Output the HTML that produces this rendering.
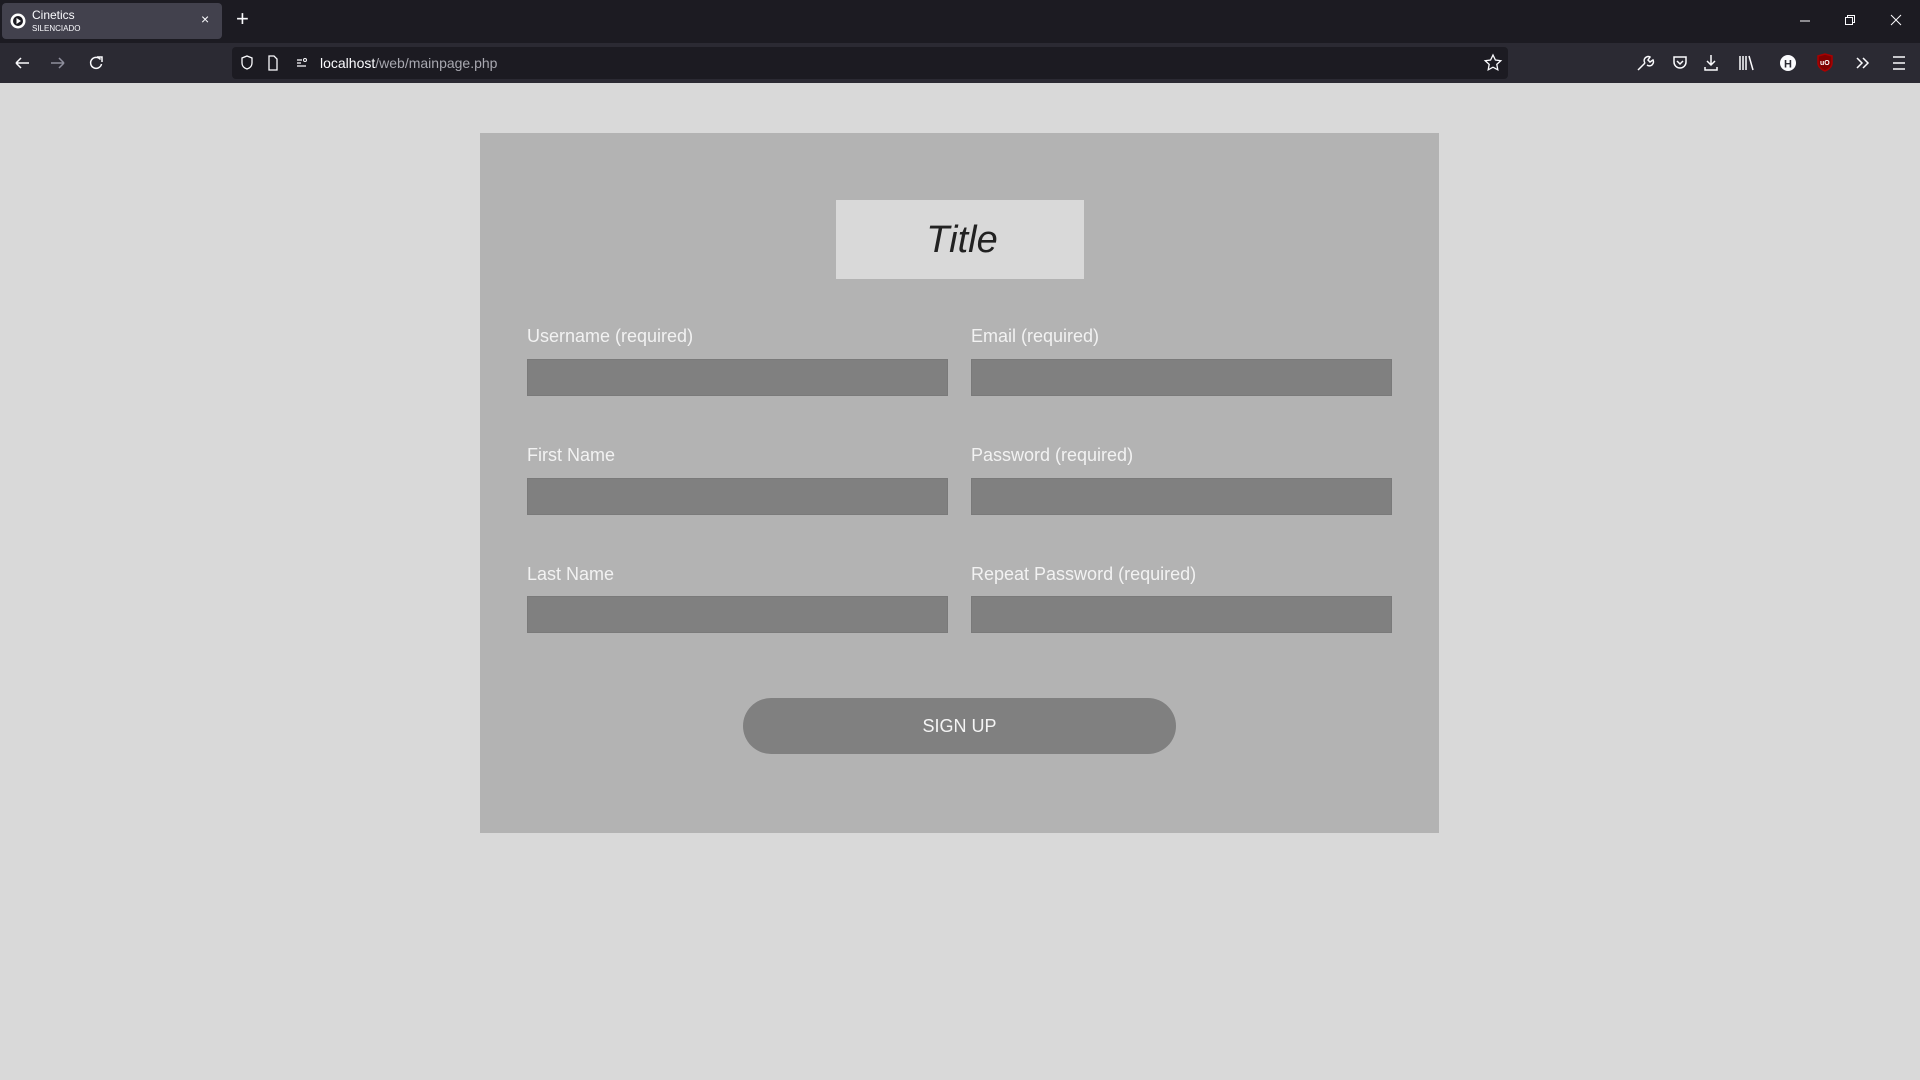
<!DOCTYPE html>
<html><head><meta charset="utf-8">
<style>
*{margin:0;padding:0;box-sizing:border-box}
body{width:1920px;height:1080px;background:#d9d9d9;font-family:"Liberation Sans",Arial,sans-serif;position:relative;overflow:hidden}
.abs{position:absolute}
#tabs{left:0;top:0;width:1920px;height:43px;background:#1c1b22}
#tool{left:0;top:43px;width:1920px;height:40px;background:#2b2a33}
#tab{left:2px;top:3px;width:220px;height:36px;background:#42414d;border-radius:4px}
.lbl{color:#f2f2f2;font-size:18px;position:absolute}
.inp{position:absolute;background:#808080;height:37px;width:421px;border:1px solid #7a7a7a}
svg{position:absolute}
</style></head><body>
<div id="tabs" class="abs"></div>
<div id="tab" class="abs"></div>
<svg style="left:10px;top:13px" width="16" height="16" viewBox="0 0 16 16"><circle cx="8" cy="8" r="7.5" fill="#fff"/><circle cx="8" cy="8" r="5" fill="#1c1b22"/><path d="M6.5 5 L11 8 L6.5 11Z" fill="#fff"/></svg>
<div class="abs" style="left:32px;top:8px;color:#fbfbfe;font-size:12px">Cinetics</div>
<div class="abs" style="left:32px;top:24px;color:#fbfbfe;font-size:8px">SILENCIADO</div>
<div class="abs" style="left:201px;top:11px;color:#fbfbfe;font-size:14px">×</div>
<div class="abs" style="left:236px;top:6px;color:#fbfbfe;font-size:22px;font-weight:300">+</div>
<svg style="left:1797px;top:14px" width="110" height="14"><path d="M3 7h10" stroke="#fbfbfe"/><rect x="48.5" y="3.5" width="7" height="7" fill="none" stroke="#fbfbfe"/><path d="M50.5 3.5v-2h7v7h-2" fill="none" stroke="#fbfbfe"/><path d="M94 1l10 10M104 1l-10 10" stroke="#fbfbfe"/></svg>
<div id="tool" class="abs"></div>
<svg style="left:14px;top:55px" width="100" height="16"><path d="M2 8h13M2 8l5-5M2 8l5 5" stroke="#fbfbfe" stroke-width="1.5" fill="none"/><path d="M37 8h13M50 8l-5-5M50 8l-5 5" stroke="#8f8f9d" stroke-width="1.5" fill="none"/><path d="M86.5 4.5A5.5 5.5 0 1 0 87.5 9" stroke="#fbfbfe" stroke-width="1.5" fill="none"/><path d="M83 2h5v5" stroke="#fbfbfe" stroke-width="1.5" fill="none"/></svg>
<div class="abs" style="left:232px;top:47px;width:1276px;height:32px;background:#1c1b22;border-radius:4px"></div>
<svg style="left:240px;top:55px" width="70" height="16"><path d="M7 1l5 2v5c0 3-2 5-5 6c-3-1-5-3-5-6V3z" fill="none" stroke="#fbfbfe" stroke-width="1.3"/><path d="M29 1h5l3 3v11h-8z" fill="none" stroke="#fbfbfe" stroke-width="1.3"/><path d="M57 5h5M57 11h9M57 8h4" stroke="#fbfbfe" stroke-width="1.2"/><circle cx="65" cy="5" r="1.5" fill="none" stroke="#fbfbfe"/></svg>
<div class="abs" style="left:320px;top:55px;font-size:14px;color:#fbfbfe">localhost<span style="color:#a8a8b0">/web/mainpage.php</span></div>
<svg style="left:1483px;top:53px" width="20" height="20"><path d="M10 2l2.4 5 5.4.7-4 3.7 1 5.4-4.8-2.6-4.8 2.6 1-5.4-4-3.7 5.4-.7z" fill="none" stroke="#fbfbfe" stroke-width="1.3"/></svg>
<svg style="left:1636px;top:53px" width="270" height="20" fill="none" stroke="#fbfbfe" stroke-width="1.5">
<path d="M2 17l7-7M9 10a4 4 0 0 1 5-6l-2 3 2 2 3-2a4 4 0 0 1-6 5"/>
<path d="M38 4h12v5a6 6 0 0 1-12 0z M41 8l3 3 3-3"/>
<path d="M75 2v10M71 8l4 4 4-4M69 14v3h12v-3"/>
<path d="M104 3v14M107 3v14M110 3v14M113 3l4 14"/>
<circle cx="152" cy="10" r="8" fill="#fbfbfe" stroke="none"/><text x="148" y="14.5" font-size="11" font-weight="bold" fill="#2b2a33" stroke="none" font-family="Liberation Sans">H</text>
<path d="M182 3l7-2 7 2v7c0 4-4 7-7 8c-3-1-7-4-7-8z" fill="#800000" stroke="#a00"/><text x="184" y="12" font-size="7" font-weight="bold" fill="#fff" stroke="none" font-family="Liberation Sans">uO</text>
<path d="M221 5l5 5-5 5M227 5l5 5-5 5"/>
<path d="M257 4h12M257 10h12M257 16h12"/>
</svg>
<div class="abs" style="left:480px;top:133px;width:959px;height:700px;background:#b3b3b3"></div>
<div class="abs" style="left:836px;top:200px;width:248px;height:79px;background:#d9d9d9;color:#222;font-style:italic;font-size:38px;text-align:center;line-height:81px;padding-left:4px">Title</div>
<div class="lbl" style="left:527px;top:326px">Username (required)</div>
<div class="lbl" style="left:971px;top:326px">Email (required)</div>
<div class="inp" style="left:527px;top:359px"></div>
<div class="inp" style="left:971px;top:359px"></div>
<div class="lbl" style="left:527px;top:445px">First Name</div>
<div class="lbl" style="left:971px;top:445px">Password (required)</div>
<div class="inp" style="left:527px;top:478px"></div>
<div class="inp" style="left:971px;top:478px"></div>
<div class="lbl" style="left:527px;top:564px">Last Name</div>
<div class="lbl" style="left:971px;top:564px">Repeat Password (required)</div>
<div class="inp" style="left:527px;top:596px"></div>
<div class="inp" style="left:971px;top:596px"></div>
<div class="abs" style="left:743px;top:698px;width:433px;height:56px;background:#808080;border-radius:28px;color:#f4f4f4;font-size:18px;text-align:center;line-height:56px">SIGN UP</div>
</body></html>
